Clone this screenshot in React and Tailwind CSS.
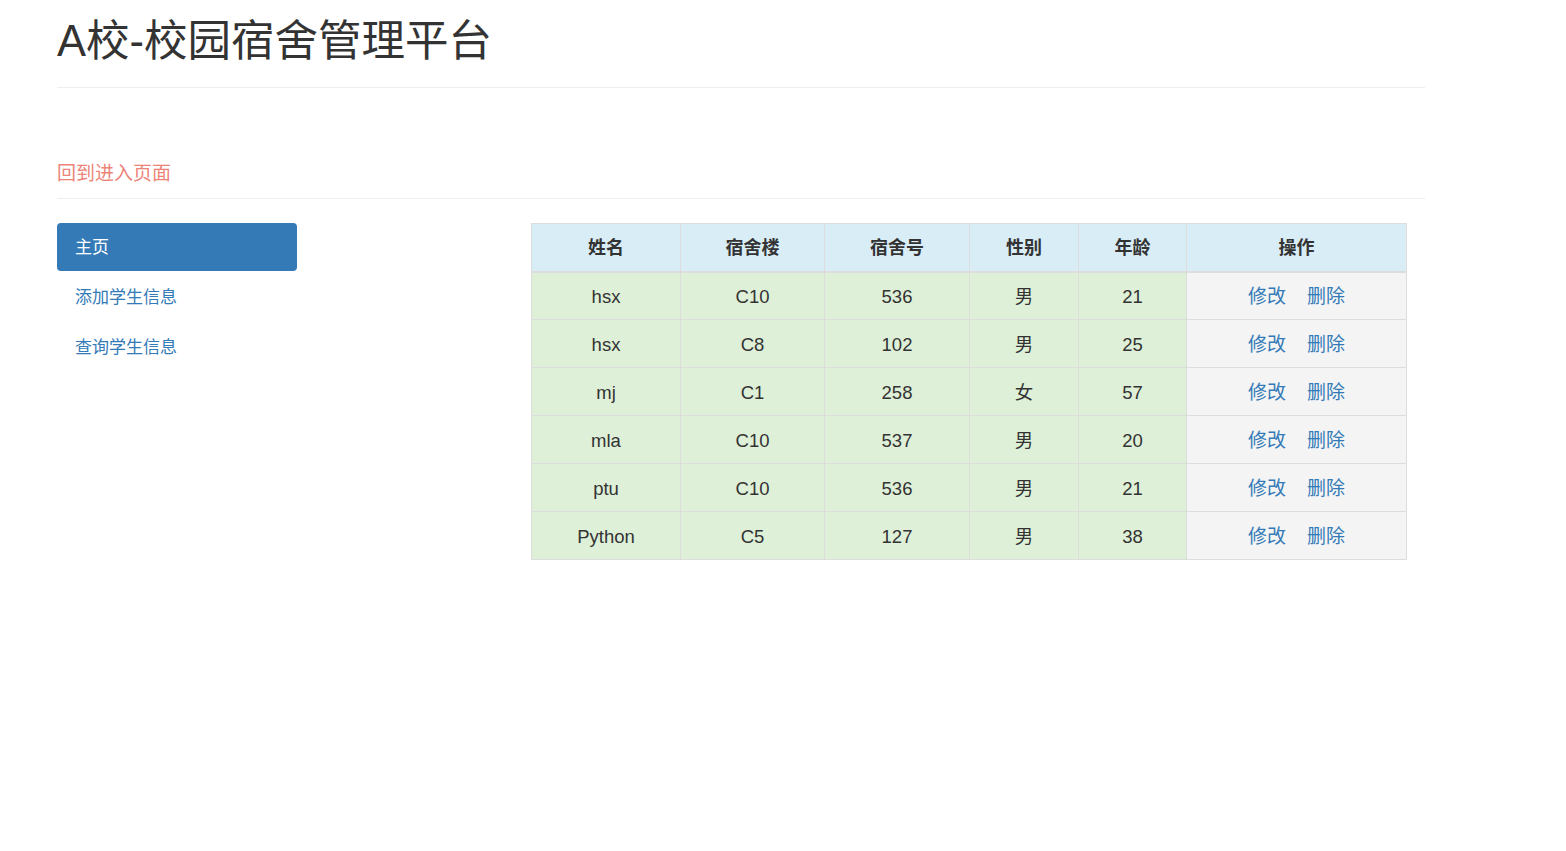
import React from 'react';

const rows = [
    { name: 'hsx', building: 'C10', room: '536', gender: '男', age: '21' },
    { name: 'hsx', building: 'C8', room: '102', gender: '男', age: '25' },
    { name: 'mj', building: 'C1', room: '258', gender: '女', age: '57' },
    { name: 'mla', building: 'C10', room: '537', gender: '男', age: '20' },
    { name: 'ptu', building: 'C10', room: '536', gender: '男', age: '21' },
    { name: 'Python', building: 'C5', room: '127', gender: '男', age: '38' },
];

const font = { fontFamily: '"Liberation Sans", "Noto Sans CJK SC", sans-serif' };

const App = () => {
    return (
        <div className="min-h-screen bg-white text-[#333]" style={font}>
            <div className="w-[1368px] ml-[57px]">
                {/* Header */}
                <h1 className="pt-[17px] text-[43.5px] leading-[48px] font-normal text-[#333] pb-[22px] border-b border-[#eee]">
                    A校-校园宿舍管理平台
                </h1>

                <div className="pt-[72px] pb-[10px] border-b border-[#eee]">
                    <a href="#" className="text-[19px] leading-[28px] text-[#ec8478]">回到进入页面</a>
                </div>

                <div className="flex pt-[24px]">
                    {/* Sidebar */}
                    <ul className="w-[240px] flex flex-col gap-[2px]">
                        <li>
                            <a href="#" className="block h-[48px] rounded-[4px] bg-[#337ab7] text-white text-[17px] pt-[2px] leading-[46px] px-[18px]">主页</a>
                        </li>
                        <li>
                            <a href="#" className="block h-[48px] text-[#337ab7] text-[17px] pt-[2px] leading-[46px] px-[18px]">添加学生信息</a>
                        </li>
                        <li>
                            <a href="#" className="block h-[48px] text-[#337ab7] text-[17px] pt-[2px] leading-[46px] px-[18px]">查询学生信息</a>
                        </li>
                    </ul>

                    {/* Table */}
                    <div className="ml-[234px]">
                        <table className="border-collapse w-[876px] text-[18px] text-[#333]">
                            <thead>
                                <tr className="bg-[#d9edf7]">
                                    <th className="w-[149px] h-[48px] pt-[3px] border border-[#ddd] border-b-2 font-bold">姓名</th>
                                    <th className="w-[144px] h-[48px] pt-[3px] border border-[#ddd] border-b-2 font-bold">宿舍楼</th>
                                    <th className="w-[145px] h-[48px] pt-[3px] border border-[#ddd] border-b-2 font-bold">宿舍号</th>
                                    <th className="w-[109px] h-[48px] pt-[3px] border border-[#ddd] border-b-2 font-bold">性别</th>
                                    <th className="w-[108px] h-[48px] pt-[3px] border border-[#ddd] border-b-2 font-bold">年龄</th>
                                    <th className="w-[220px] h-[48px] pt-[3px] border border-[#ddd] border-b-2 font-bold">操作</th>
                                </tr>
                            </thead>
                            <tbody>
                                {rows.map((r, i) => (
                                    <tr key={i}>
                                        <td className="h-[48px] pt-[3px] border border-[#ddd] bg-[#dff0d8] text-center text-[18.5px]">{r.name}</td>
                                        <td className="h-[48px] pt-[3px] border border-[#ddd] bg-[#dff0d8] text-center text-[18.5px]">{r.building}</td>
                                        <td className="h-[48px] pt-[3px] border border-[#ddd] bg-[#dff0d8] text-center text-[18.5px]">{r.room}</td>
                                        <td className="h-[48px] pt-[3px] border border-[#ddd] bg-[#dff0d8] text-center text-[18.5px]">{r.gender}</td>
                                        <td className="h-[48px] pt-[3px] border border-[#ddd] bg-[#dff0d8] text-center text-[18.5px]">{r.age}</td>
                                        <td className="h-[48px] pt-[3px] border border-[#ddd] bg-[#f4f4f4] text-center">
                                            <a href="#" className="text-[#337ab7] text-[19px]">修改</a>
                                            <a href="#" className="text-[#337ab7] text-[19px] ml-[21px]">删除</a>
                                        </td>
                                    </tr>
                                ))}
                            </tbody>
                        </table>
                    </div>
                </div>
            </div>
        </div>
    );
};

export default App;
